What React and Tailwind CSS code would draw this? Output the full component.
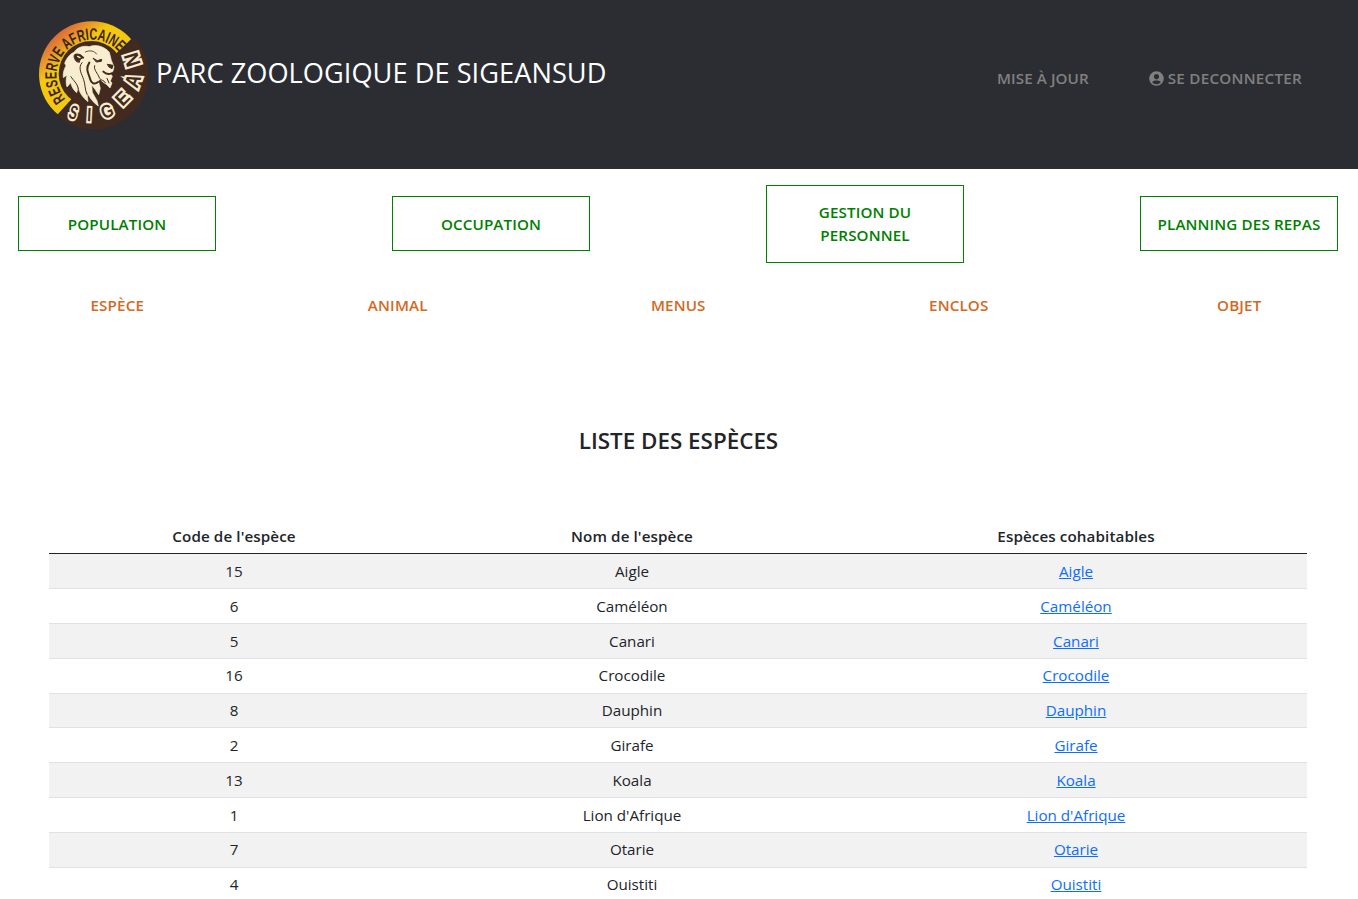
import React from "react";
import { FaUserCircle } from "react-icons/fa";

const species = [
  [15, "Aigle"],
  [6, "Caméléon"],
  [5, "Canari"],
  [16, "Crocodile"],
  [8, "Dauphin"],
  [2, "Girafe"],
  [13, "Koala"],
  [1, "Lion d'Afrique"],
  [7, "Otarie"],
  [4, "Ouistiti"],
];

const sections = ["POPULATION", "OCCUPATION", "GESTION DU PERSONNEL", "PLANNING DES REPAS"];
const links = ["ESPÈCE", "ANIMAL", "MENUS", "ENCLOS", "OBJET"];

const badgeLetters = [
  ["S", 131, 307, 17, 0.95, 1.5],
  ["I", 178, 313, 3, 1.1, 1.5],
  ["G", 231, 303, -22, 1.2, 1.45],
  ["E", 277, 264, -45, 1.45, 1.45],
  ["A", 308, 212, -70, 1.35, 1.6],
  ["N", 306, 149, -107, 1.45, 1.6],
];

function Logo() {
  return (
    <svg className="h-[130px] w-[130px] shrink-0" viewBox="0 0 390 390">
      <defs>
        <linearGradient id="ring" gradientUnits="userSpaceOnUse" x1="50" y1="90" x2="105" y2="155">
          <stop offset="0" stopColor="#d9623a" />
          <stop offset="0.5" stopColor="#e6932e" />
          <stop offset="1" stopColor="#f4c80f" />
        </linearGradient>
        <clipPath id="ringClip">
          <path d="M184 202L86 310L0 390V0H390L300 91Z" />
        </clipPath>
        <clipPath id="baseClip">
          <path d="M190 195L318 82L390 0V390H20L82 322Z" />
        </clipPath>
        <path id="arc" d="M107 267A106 106 0 1 1 265 124" />
      </defs>
      <circle cx="190" cy="193" r="165" fill="#432a1e" clipPath="url(#baseClip)" />
      <circle cx="185" cy="192" r="158" fill="url(#ring)" clipPath="url(#ringClip)" />
      <circle cx="184" cy="191" r="98" fill="#432a1e" />
      <text fill="#3d2418" fontSize="49" fontWeight="700" fontFamily="Liberation Sans Narrow, Liberation Sans, sans-serif">
        <textPath href="#arc" textLength="338" lengthAdjust="spacingAndGlyphs">RESERVE AFRICAINE</textPath>
      </text>
      <path
        d="M132 127C141 111 163 106 177 110C202 101 226 112 238 127L244 151L252 170L249 184L241 190L247 199L241 213L246 219L240 234L228 222L219 217L210 207L205 213L211 235L206 254L196 239L185 225L187 247L201 272L205 288C190 279 178 262 171 247L174 275C158 262 147 246 145 230L140 248C131 241 125 230 122 218L111 231C107 219 108 206 111 195L100 203C98 190 102 178 108 167L104 160C109 146 119 132 132 127Z"
        fill="#f8edcf"
        stroke="#f8edcf"
        strokeWidth="2"
      />
      <g fill="none" stroke="#432a1e" strokeLinecap="round" strokeLinejoin="round">
        <path d="M139 154C132 146 130 137 135 133C146 130 156 135 162 144C155 143 149 147 148 156Z" fill="#432a1e" strokeWidth="3" />
        <path d="M143 139L150 143" stroke="#f8edcf" strokeWidth="4" />
        <path d="M166 126C180 119 193 123 200 132" strokeWidth="2.5" />
        <path d="M190 145L202 152L215 148L214 154L200 156Z" fill="#432a1e" strokeWidth="3" />
        <path d="M233 163L249 166L246 176L237 171Z" fill="#432a1e" strokeWidth="3" />
        <path d="M220 185C228 193 235 194 245 190" strokeWidth="6" />
        <path d="M178 158C165 178 176 190 180 206C183 218 192 226 204 216" strokeWidth="6" />
        <path d="M194 167C190 181 204 189 208 204C215 213 222 210 226 218" strokeWidth="3" />
        <path d="M156 158C142 174 156 193 161 209C166 223 164 238 171 253" strokeWidth="3" />
        <path d="M123 200C129 212 142 218 145 237" strokeWidth="3" />
        <path d="M231 205L237 219" strokeWidth="3" />
      </g>
      <g fontFamily="Liberation Sans, sans-serif" fontWeight="700" fontSize="38" textAnchor="middle">
        {badgeLetters.map(([letter, x, y, angle, sx, sy]) => (
          <g key={letter} transform={`translate(${x} ${y}) rotate(${angle}) scale(${sx} ${sy})`}>
            <text y="13.5" fill="#f8edcf" stroke="#f8edcf" strokeWidth="9" strokeLinejoin="miter">{letter}</text>
            <text y="13.5" fill="#432a1e">{letter}</text>
          </g>
        ))}
      </g>
    </svg>
  );
}

export default function App() {
  return (
    <div className="h-[899px] overflow-hidden bg-white font-['Open_Sans',sans-serif] text-[15.2px] text-[#212529]">
      <header className="flex h-[169px] items-start justify-between bg-[#2c2d33] pr-14">
        <div className="flex pl-[30px] pt-[10px]">
          <Logo />
          <h1 className="-ml-1 pt-[45px] text-[27.2px] leading-9 tracking-[0.03px] text-white">PARC ZOOLOGIQUE DE SIGEANSUD</h1>
        </div>
        <nav className="flex gap-[60px] pt-[67px] font-semibold leading-[22.8px] text-[#808080]">
          <a className="tracking-[0.08px]">MISE À JOUR</a>
          <a className="flex items-center gap-1 tracking-[0.26px]">
            <FaUserCircle className="size-[15px]" />
            SE DECONNECTER
          </a>
        </nav>
      </header>

      <nav className="flex h-[109px] items-center justify-between pl-[18px] pr-5">
        {sections.map((name) => (
          <a key={name} className="w-[198px] border border-[#008000] px-4 pb-[14.5px] pt-[15.5px] text-center font-semibold leading-[23px] tracking-[0.12px] text-[#008000]">
            {name}
          </a>
        ))}
      </nav>

      <nav className="-ml-[23px] grid w-[1402.5px] grid-cols-5 pt-4 text-center font-semibold leading-[22.8px] tracking-[0.15px] text-[#d2691e]">
        {links.map((name) => (
          <a key={name}>{name}</a>
        ))}
      </nav>

      <h2 className="pr-px pt-[108px] text-center text-[22.4px] font-semibold leading-8">LISTE DES ESPÈCES</h2>

      <table className="ml-[49px] mt-[62.6px] w-[1258px] table-fixed border-collapse text-center">
        <colgroup>
          <col className="w-[370px]" />
          <col className="w-[426px]" />
          <col className="w-[462px]" />
        </colgroup>
        <thead>
          <tr className="h-[34.6px] border-b border-[#212529]">
            <th className="font-semibold tracking-[0.1px]">Code de l'espèce</th>
            <th className="font-semibold tracking-[0.1px]">Nom de l'espèce</th>
            <th className="font-semibold tracking-[0.1px]">Espèces cohabitables</th>
          </tr>
        </thead>
        <tbody>
          {species.map(([code, name]) => (
            <tr key={code} className="h-[34.8px] border-b border-[#dee2e6] odd:bg-[#f2f2f2]">
              <td>{code}</td>
              <td>{name}</td>
              <td>
                <a className="text-[#0d6efd] underline">{name}</a>
              </td>
            </tr>
          ))}
        </tbody>
      </table>
    </div>
  );
}
